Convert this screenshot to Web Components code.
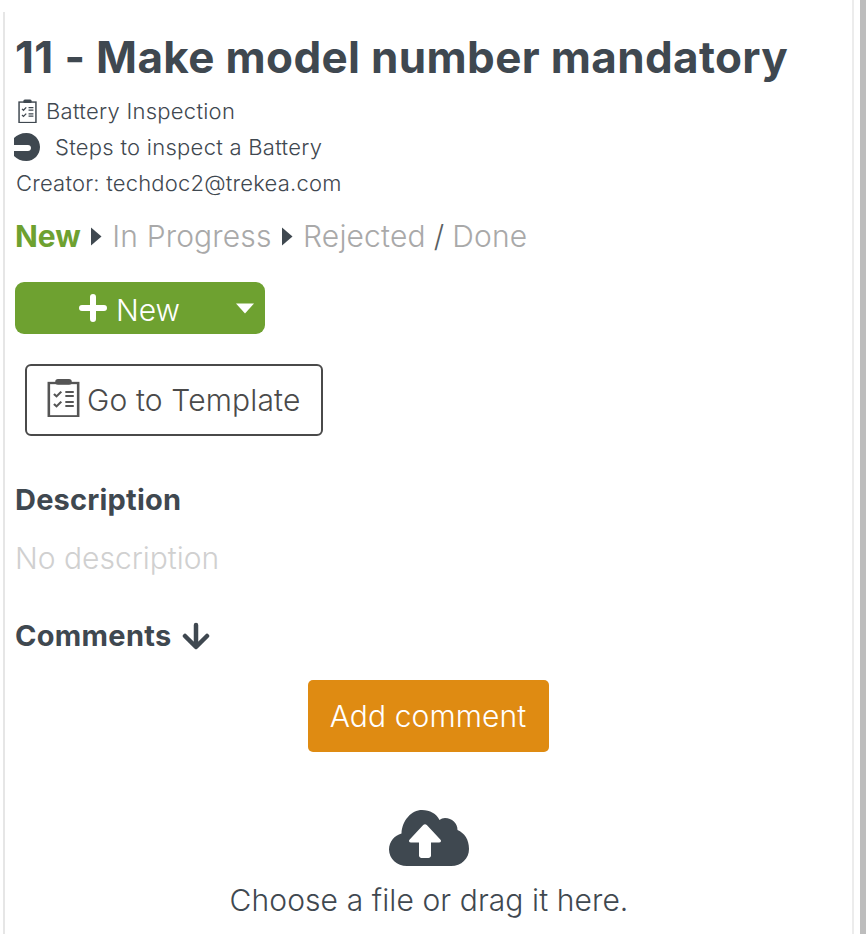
<!DOCTYPE html>
<html>
<head>
<meta charset="utf-8">
<style>
    html, body { margin: 0; height: 100%; background: #fff; overflow: hidden; }
    body { font-family: "Inter", "Liberation Sans", sans-serif; color: #3f4850; }
</style>
</head>
<body>
<issue-page></issue-page>
<script>
const checklist = (clipX, clipW, sw) => `
    <rect x="1" y="3" width="16" height="20" fill="none" stroke="currentColor" stroke-width="${sw}"/>
    <rect x="${clipX}" y="0.6" width="${clipW}" height="3.4" rx="1.5" fill="currentColor"/>
    <path d="M3.8 9.600l1.400 1.400 2.600-2.800M3.800 15.600l1.400 1.400 2.600-2.800" fill="none" stroke="currentColor" stroke-width="1.200"/>
    <path d="M10 8.400h4.600M10 10.800h4.600M10 14.400h4.600M10 16.800h4.600" fill="none" stroke="currentColor" stroke-width="1.200"/>`;

class StatusTrail extends HTMLElement {
    constructor() {
        super();
        this.attachShadow({ mode: 'open' });
        const arrow = `<svg width="12" height="19" viewBox="0 0 12 19"><path d="M1 0.500L11.500 9.500L1 18.500Z" fill="#3f4850"/></svg>`;
        this.shadowRoot.innerHTML = `
            <style>
                :host { display: flex; align-items: center; font-size: 30px; line-height: 36px; color: #a9a9a9; font-weight: 300; letter-spacing: 0.15px; }
                .on { color: #6ea130; font-weight: 700; letter-spacing: 0; }
                svg { margin: 0 10px 0 9.500px; }
                .sep { color: #5a5f63; margin: 0 8px; }
            </style>
            <span class="on">New</span>${arrow}<span>In Progress</span>${arrow}<span>Rejected</span><span class="sep">/</span><span>Done</span>
        `;
    }
}

class SplitButton extends HTMLElement {
    constructor() {
        super();
        this.attachShadow({ mode: 'open' });
        this.shadowRoot.innerHTML = `
            <style>
                :host { display: flex; width: 250px; height: 52px; background: #6ea130; border-radius: 9px; color: #fff; font-size: 30px; font-weight: 300; }
                .main { flex: 1; display: flex; align-items: center; justify-content: center; gap: 9px; padding-left: 19px; }
                .main span { margin-top: 3px; }
                .caret { width: 40px; display: flex; align-items: center; justify-content: center; }
            </style>
            <div class="main">
                <svg width="28" height="28" viewBox="0 0 28 28"><path d="M14 3v22M3 14h22" stroke="#fff" stroke-width="6" stroke-linecap="round"/></svg>
                <span><slot></slot></span>
            </div>
            <div class="caret"><svg width="20" height="11" viewBox="0 0 20 11"><path d="M1 0.500H19L10 10.500Z" fill="#fff"/></svg></div>
        `;
    }
}

class TemplateButton extends HTMLElement {
    constructor() {
        super();
        this.attachShadow({ mode: 'open' });
        this.shadowRoot.innerHTML = `
            <style>
                :host { display: flex; align-items: center; gap: 7px; box-sizing: border-box; width: 298px; height: 72px; padding: 0 0 0 20px; border: 2px solid #4a4a4a; border-radius: 6px; color: #4a4a4a; font-size: 30px; font-weight: 300; letter-spacing: 0.15px; }
                svg { color: #555; margin-top: -5px; }
            </style>
            <svg width="33" height="39" viewBox="0 0 18 23.400" preserveAspectRatio="none">${checklist(4.500, 9, 1.400)}</svg>
            <span><slot></slot></span>
        `;
    }
}

class MetaRow extends HTMLElement {
    constructor() {
        super();
        this.attachShadow({ mode: 'open' });
        this.shadowRoot.innerHTML = `
            <style>
                :host { display: flex; align-items: center; height: 36px; font-size: 22px; letter-spacing: 0.27px; font-weight: 300; color: #3f4850; }
            </style>
            <slot></slot>
        `;
    }
}

class UploadBox extends HTMLElement {
    constructor() {
        super();
        this.attachShadow({ mode: 'open' });
        this.shadowRoot.innerHTML = `
            <style>
                :host { display: flex; flex-direction: column; align-items: center; font-size: 30px; font-weight: 300; letter-spacing: 0.1px; color: #3f4850; }
                span { line-height: 36px; margin-top: 16px; }
            </style>
            <svg width="80" height="56" viewBox="0 0 80 56">
                <path d="M18 56C8 56 0 48.500 0 39.500C0 31.500 5.500 25.500 12.500 23.500C13 10.500 22.500 0 33 0C41 0 47.500 3.800 50.500 10C52 8.700 54 8 56 8C63 8 68.500 13 68.500 20C75.500 23 80 29.500 80 39C80 48.500 72.500 56 62 56Z" fill="#3f4850"/>
                <path d="M32.500 48C31.300 48 30 46.800 30 45.500V32.500H22C20 32.500 19.300 30.800 20.700 29.500L34.200 15C35.300 14 36.700 14 37.800 15L51.300 29.500C52.700 30.800 52 32.500 50 32.500H42V45.500C42 46.800 40.700 48 39.500 48Z" fill="#fff"/>
            </svg>
            <span><slot></slot></span>
        `;
    }
}

class IssuePage extends HTMLElement {
    constructor() {
        super();
        this.attachShadow({ mode: 'open' });
        this.shadowRoot.innerHTML = `
            <style>
                :host { display: block; position: relative; width: 866px; height: 934px; overflow: hidden; background: linear-gradient(#e6e6e6, #e6e6e6) 3px 12px / 2px 922px no-repeat; }
                .frame { box-sizing: border-box; height: 934px; width: 849px; margin-left: 5px; border-right: 2px solid #ececec; padding: 26px 0 0 10px; }
                .scroll { position: absolute; top: 0; right: 0; width: 6px; height: 934px; background: #bdbdbd; }
                h1 { margin: 0 0 5px; font-size: 44px; line-height: 62px; font-weight: 700; color: #3f4850; letter-spacing: 0.35px; white-space: nowrap; }
                status-trail { margin: 17px 0 0 0; }
                split-button { margin-top: 28px; }
                template-button { margin: 30px 0 0 10px; }
                h2 { margin: 0; font-size: 29px; line-height: 36px; font-weight: 700; color: #3f4850; letter-spacing: 0.2px; display: flex; align-items: center; gap: 10px; }
                .desc { margin: 46px 0 0 0; }
                .none { margin: 22px 0 0 0; font-size: 30px; line-height: 36px; font-weight: 300; color: #d0d0d0; }
                .comments { margin: 42px 0 0 0; letter-spacing: 0.3px; }
                .add-row { display: flex; justify-content: center; margin: 26px 0 0 0; width: 826px; }
                .add { width: 241px; height: 72px; background: #df8b12; color: #fff; border-radius: 5px; display: flex; align-items: center; justify-content: center; font-size: 30px; font-weight: 300; letter-spacing: 0.1px; box-sizing: border-box; padding-bottom: 1px; }
                upload-box { margin-top: 58px; width: 828px; }
                .icon1 { margin: 0 9px 0 3px; color: #3f4850; }
                .icon2 { margin: 0 15px 0 -1px; }
                .creator { margin-left: 1px; letter-spacing: 0.2px; }
            </style>
            <div class="frame">
                <h1>11 - Make model number mandatory</h1>
                <div class="meta">
                    <meta-row><svg class="icon1" width="19" height="24" viewBox="0 0 18 23.400" preserveAspectRatio="none">${checklist(5, 8, 1.400)}</svg>Battery Inspection</meta-row>
                    <meta-row><svg class="icon2" width="26" height="28" viewBox="0 0 26 28"><path d="M0 5C3 2 7 0 12.500 0C20 0 26 6.300 26 14C26 21.700 20 28 12.500 28C7 28 3 26 0 23V18H14C15.600 18 17 16.700 17 15C17 13.300 15.600 12 14 12H0Z" fill="#3f4850"/></svg>Steps to inspect a Battery</meta-row>
                    <meta-row class="creator">Creator: techdoc2@trekea.com</meta-row>
                </div>
                <status-trail></status-trail>
                <split-button>New</split-button>
                <template-button>Go to Template</template-button>
                <h2 class="desc">Description</h2>
                <div class="none">No description</div>
                <h2 class="comments">Comments
                    <svg width="28" height="28" viewBox="0 0 28 28"><path d="M14 3V24M3 14L14 25L25 14" fill="none" stroke="#3f4850" stroke-width="4.500" stroke-linecap="round" stroke-linejoin="round"/></svg>
                </h2>
                <div class="add-row"><div class="add">Add comment</div></div>
                <upload-box>Choose a file or drag it here.</upload-box>
            </div>
            <div class="scroll"></div>
        `;
    }
}

customElements.define('status-trail', StatusTrail);
customElements.define('split-button', SplitButton);
customElements.define('template-button', TemplateButton);
customElements.define('meta-row', MetaRow);
customElements.define('upload-box', UploadBox);
customElements.define('issue-page', IssuePage);
</script>
</body>
</html>
